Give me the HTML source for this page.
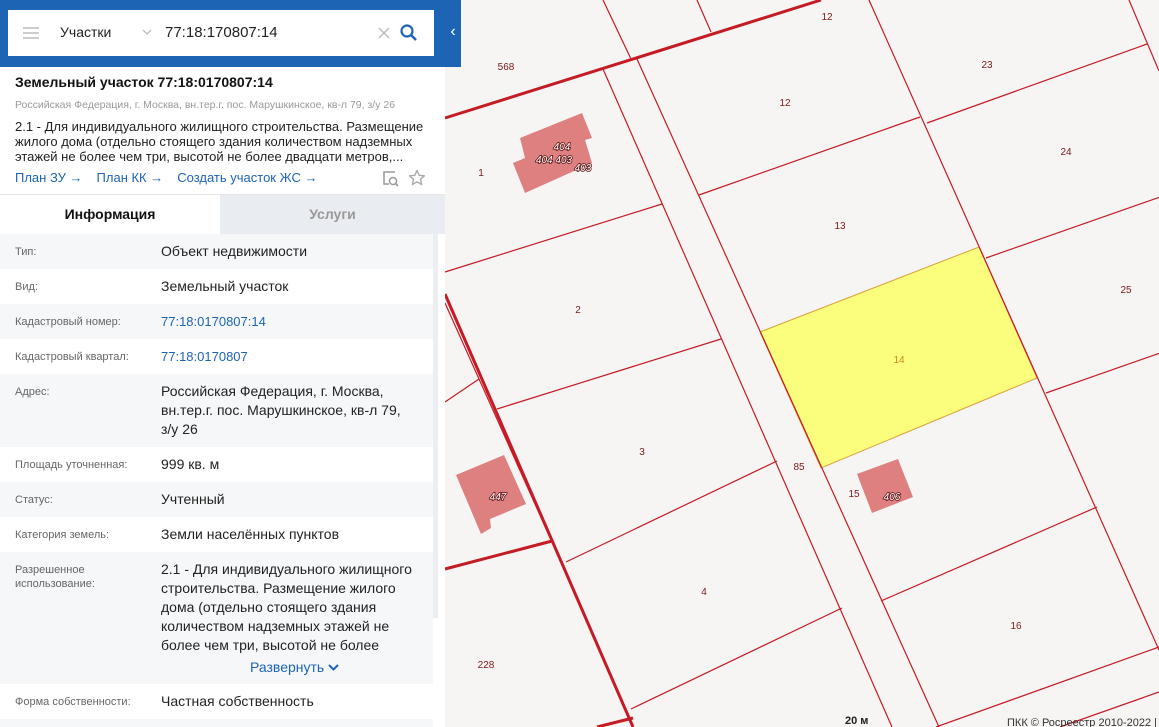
<!DOCTYPE html>
<html><head><meta charset="utf-8"><style>
*{margin:0;padding:0;box-sizing:border-box}
body{width:1159px;height:727px;overflow:hidden;font-family:"Liberation Sans","DejaVu Sans",sans-serif;background:#f6f5f4;position:relative}
#map{position:absolute;left:0;top:0}
#panel{position:absolute;left:0;top:0;width:445px;height:727px;background:#fff}
.hdr{position:absolute;left:0;top:0;width:445px;height:67px;background:#1e64b4}
.tab{position:absolute;left:445px;top:0;width:16px;height:67px;background:#1e64b4;color:#fff;font-size:16px;text-align:center;line-height:64px}
.search{position:absolute;left:8px;top:10px;width:426px;height:46px;background:#fff}
.row{position:absolute;left:0;width:433px;font-size:14px;color:#222}
.row .l{position:absolute;left:15px;font-size:11px;color:#666;line-height:14px}
.row .v{position:absolute;left:161px;line-height:19px}
.g{background:#f5f7f9}
a{color:#1e64b4;text-decoration:none}
.bl{fill:#fff;stroke:#5a1010;stroke-width:1.6px;paint-order:stroke;font-style:italic;font-size:10px}
</style></head><body>
<svg id="map" width="1159" height="727" viewBox="0 0 1159 727">
<rect width="1159" height="727" fill="#f6f5f4"/>
<polygon points="760,332 979,247 1037,378 821,468" fill="#fbfd7c" stroke="#d9a23a" stroke-width="1"/>
<g stroke="#c41b25" fill="none" stroke-width="1.2">
<line x1="603" y1="0" x2="631" y2="59"/>
<line x1="603" y1="69" x2="892" y2="727"/>
<line x1="637" y1="59" x2="939" y2="727"/>
<line x1="697" y1="0" x2="711" y2="32"/>
<line x1="869" y1="0" x2="1159" y2="650"/>
<line x1="1129" y1="0" x2="1159" y2="71"/>
<line x1="445" y1="303" x2="552" y2="542"/>
<line x1="927" y1="123" x2="1147" y2="44"/>
<line x1="699" y1="195" x2="920" y2="117"/>
<line x1="445" y1="272" x2="662" y2="204"/>
<line x1="986" y1="258" x2="1160" y2="197"/>
<line x1="497" y1="409" x2="721" y2="339"/>
<line x1="1046" y1="393" x2="1160" y2="353"/>
<line x1="445" y1="402" x2="479" y2="379"/>
<line x1="566" y1="562" x2="777" y2="461"/>
<line x1="881" y1="601" x2="1097" y2="507"/>
<line x1="631" y1="709" x2="842" y2="608"/>
<line x1="936" y1="727" x2="1159" y2="647"/>
<line x1="1060" y1="727" x2="1159" y2="692"/>
</g>
<g stroke="#c41b25" fill="none" stroke-width="3">
<line x1="445" y1="118" x2="821" y2="0"/>
<line x1="445" y1="294" x2="633" y2="727"/>
<line x1="445" y1="569" x2="552" y2="541"/>
<line x1="597" y1="727" x2="633" y2="718"/>
</g>
<g fill="#de8080">
<polygon points="520,138 582,113 592,138 585,140 592,163 525,193 513,163 525,158"/>
<polygon points="456,475 504,455 526,504 490,519 491,528 481,534"/>
<polygon points="857,474 898,459 913,497 872,513"/>
</g>
<g font-size="10" fill="#7a1a1a" font-family="Liberation Sans,sans-serif" text-anchor="middle">
<text x="506" y="70">568</text><text x="827" y="20">12</text><text x="987" y="68">23</text>
<text x="785" y="106">12</text><text x="1066" y="155">24</text><text x="481" y="176">1</text>
<text x="840" y="229">13</text><text x="578" y="313">2</text><text x="1126" y="293">25</text>
<text x="899" y="363" fill="#c88a20">14</text><text x="642" y="455">3</text><text x="799" y="470">85</text>
<text x="854" y="497">15</text><text x="704" y="595">4</text><text x="1016" y="629">16</text><text x="486" y="668">228</text>
</g>
<g text-anchor="middle" font-family="Liberation Sans,sans-serif">
<text class="bl" x="562" y="150">404</text><text class="bl" x="554" y="163">404 403</text><text class="bl" x="583" y="171">403</text>
<text class="bl" x="498" y="500">447</text><text class="bl" x="892" y="500">406</text>
</g>
<text x="845" y="724" font-size="11" font-weight="bold" fill="#222">20 м</text>
<text x="1007" y="726" font-size="11" fill="#333">ПКК © Росреестр 2010-2022 |</text>
</svg>

<div id="panel">
<div class="hdr"></div>
<div class="search">
 <div style="position:absolute;left:15px;top:17px;width:16px;height:2px;background:#ccc;box-shadow:0 5px 0 #ccc,0 10px 0 #ccc"></div>
 <div style="position:absolute;left:52px;top:14px;font-size:14px;color:#222">Участки</div>
 <svg style="position:absolute;left:134px;top:19px" width="10" height="8"><path d="M1 1l4 4 4-4" stroke="#bbb" stroke-width="1.3" fill="none"/></svg>
 <div style="position:absolute;left:157px;top:14px;font-size:15px;color:#222">77:18:170807:14</div>
 <svg style="position:absolute;left:370px;top:17px" width="12" height="12"><path d="M1 1l10 10M11 1L1 11" stroke="#bbb" stroke-width="1.4"/></svg>
 <svg style="position:absolute;left:392px;top:14px" width="18" height="18"><circle cx="7" cy="7" r="5.5" stroke="#1e64b4" stroke-width="2.2" fill="none"/><line x1="11" y1="11" x2="16" y2="16" stroke="#1e64b4" stroke-width="2.5"/></svg>
</div>
<div style="position:absolute;left:15px;top:74px;font-size:14px;font-weight:bold;color:#111">Земельный участок 77:18:0170807:14</div>
<div style="position:absolute;left:15px;top:99px;font-size:10.5px;color:#999">Российская Федерация, г. Москва, вн.тер.г. пос. Марушкинское, кв-л 79, з/у 26</div>
<div style="position:absolute;left:15px;top:119px;width:420px;font-size:13px;line-height:15px;color:#222">2.1 - Для индивидуального жилищного строительства. Размещение жилого дома (отдельно стоящего здания количеством надземных этажей не более чем три, высотой не более двадцати метров,...</div>
<div style="position:absolute;left:15px;top:170px;font-size:13px;color:#1e64b4"><span>План ЗУ →</span><span style="margin-left:14px">План КК →</span><span style="margin-left:14px">Создать участок ЖС →</span></div>
<svg style="position:absolute;left:382px;top:170px" width="18" height="18"><path d="M13 2H2v12h5" stroke="#999" fill="none" stroke-width="1.5"/><circle cx="11" cy="11" r="3.5" stroke="#999" fill="none" stroke-width="1.5"/><line x1="13.5" y1="13.5" x2="16" y2="16" stroke="#999" stroke-width="1.6"/></svg>
<svg style="position:absolute;left:408px;top:169px" width="18" height="18"><path d="M9 1.5l2.2 4.8 5.2.5-3.9 3.5 1.1 5.2L9 12.8l-4.6 2.7 1.1-5.2L1.6 6.8l5.2-.5z" stroke="#aaa" stroke-width="1.4" fill="none" stroke-linejoin="round"/></svg>
<div style="position:absolute;left:0;top:195px;width:220px;height:39px;background:#fff;text-align:center;line-height:39px;font-size:14px;font-weight:bold;color:#111">Информация</div>
<div style="position:absolute;left:220px;top:195px;width:225px;height:39px;background:#e9ecf0;text-align:center;line-height:39px;font-size:14px;font-weight:bold;color:#999">Услуги</div>
<div style="position:absolute;left:0;top:194px;width:445px;height:1px;background:#e5e5e5"></div>

<div class="row g" style="top:234px;height:35px"><div class="l" style="top:11px">Тип:</div><div class="v" style="top:8px">Объект недвижимости</div></div>
<div class="row" style="top:269px;height:35px"><div class="l" style="top:11px">Вид:</div><div class="v" style="top:8px">Земельный участок</div></div>
<div class="row g" style="top:304px;height:35px"><div class="l" style="top:11px">Кадастровый номер:</div><div class="v" style="top:8px;font-size:13px"><a>77:18:0170807:14</a></div></div>
<div class="row" style="top:339px;height:35px"><div class="l" style="top:11px">Кадастровый квартал:</div><div class="v" style="top:8px;font-size:13px"><a>77:18:0170807</a></div></div>
<div class="row g" style="top:374px;height:73px"><div class="l" style="top:11px">Адрес:</div><div class="v" style="top:8px">Российская Федерация, г. Москва,<br>вн.тер.г. пос. Марушкинское, кв-л 79,<br>з/у 26</div></div>
<div class="row" style="top:447px;height:35px"><div class="l" style="top:11px">Площадь уточненная:</div><div class="v" style="top:8px">999 кв. м</div></div>
<div class="row g" style="top:482px;height:35px"><div class="l" style="top:11px">Статус:</div><div class="v" style="top:8px">Учтенный</div></div>
<div class="row" style="top:517px;height:35px"><div class="l" style="top:11px">Категория земель:</div><div class="v" style="top:8px">Земли населённых пунктов</div></div>
<div class="row g" style="top:552px;height:132px"><div class="l" style="top:11px">Разрешенное<br>использование:</div><div class="v" style="top:8px;width:272px;height:95px;overflow:hidden">2.1 - Для индивидуального жилищного<br>строительства. Размещение жилого<br>дома (отдельно стоящего здания<br>количеством надземных этажей не<br>более чем три, высотой не более</div>
<div style="position:absolute;left:250px;top:107px;font-size:14px;color:#1e64b4">Развернуть <svg width="11" height="8"><path d="M1 1l4.5 4.5L10 1" stroke="#1e64b4" stroke-width="2" fill="none"/></svg></div></div>
<div class="row" style="top:684px;height:35px"><div class="l" style="top:11px">Форма собственности:</div><div class="v" style="top:8px">Частная собственность</div></div>
<div class="row g" style="top:719px;height:8px"></div>
<div style="position:absolute;left:433px;top:234px;width:5px;height:384px;background:#eceef1"></div>
</div>
<div class="tab">‹</div>
</body></html>
